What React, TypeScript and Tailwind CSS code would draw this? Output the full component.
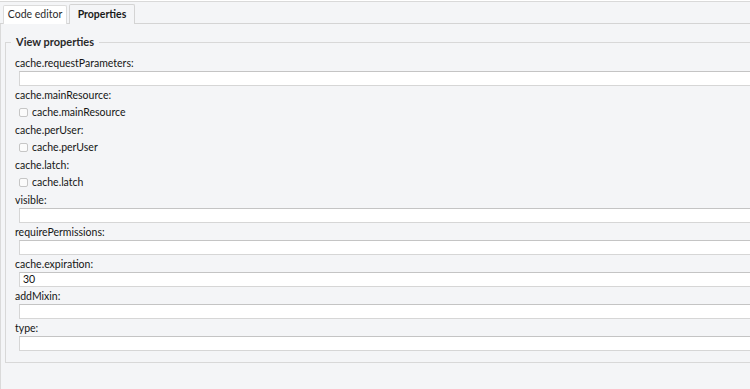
import React from "react";

type Field =
  | { kind: "text"; name: string; value?: string }
  | { kind: "check"; name: string };

const FIELDS: Field[] = [
  { kind: "text", name: "cache.requestParameters" },
  { kind: "check", name: "cache.mainResource" },
  { kind: "check", name: "cache.perUser" },
  { kind: "check", name: "cache.latch" },
  { kind: "text", name: "visible" },
  { kind: "text", name: "requirePermissions" },
  { kind: "text", name: "cache.expiration", value: "30" },
  { kind: "text", name: "addMixin" },
  { kind: "text", name: "type" },
];

function FieldRow({ f }: { f: Field }) {
  return (
    <div>
      <div className="h-[16px] pl-[9px] leading-[16px]">{f.name}:</div>
      {f.kind === "text" ? (
        <div className="mb-[1px] ml-[13px] h-[15px] border border-[#d6d6d6] border-t-[#c4c4c4] bg-white pl-[3px] leading-[13px] text-[#111]">
          {f.value ?? ""}
        </div>
      ) : (
        <label className="flex h-[19px] items-center gap-[4px] pl-[13px]">
          <span className="inline-block size-[9px] rounded-[2px] border border-[#c6c6c6] bg-[#fbfbfb]" />
          <span>{f.name}</span>
        </label>
      )}
    </div>
  );
}

export default function App() {
  return (
    <div
      className="h-[389px] w-[750px] overflow-hidden bg-[#f4f5f7] text-[10.5px] text-[#151515]"
      style={{ fontFamily: 'Lato, "Open Sans", sans-serif' }}
    >
      <div className="h-[1px] bg-white" />
      <div className="h-[1px] bg-[#d9d9d9]" />
      {/* tab bar */}
      <div className="flex h-[22px] items-end gap-[2px] border-b border-[#d4d4d4] pl-[3px]">
        <div className="-mb-px flex h-[19px] w-[64px] items-center justify-center rounded-t-[2px] border border-b-0 border-[#dcdcdc] bg-white text-[#2a2a2a]">
          Code editor
        </div>
        <div className="-mb-px flex h-[20px] w-[66px] items-center justify-center rounded-t-[2px] border border-b-0 border-[#d4d4d4] bg-[#f4f5f7] font-bold text-[#1a1a1a]">
          Properties
        </div>
      </div>
      <div className="h-[365px] border-l border-[#dadada] pt-[10px] pl-[4px]">
        <fieldset className="-mr-4 border border-[#d8d8d8] pb-[10px]">
          <legend className="ml-[5px] px-[5px] text-[11px] font-bold leading-[16px] text-[#2a2a2a]">
            View properties
          </legend>
          <div className="pt-[5px]">
            {FIELDS.map((f) => (
              <FieldRow key={f.name} f={f} />
            ))}
          </div>
        </fieldset>
      </div>
    </div>
  );
}
